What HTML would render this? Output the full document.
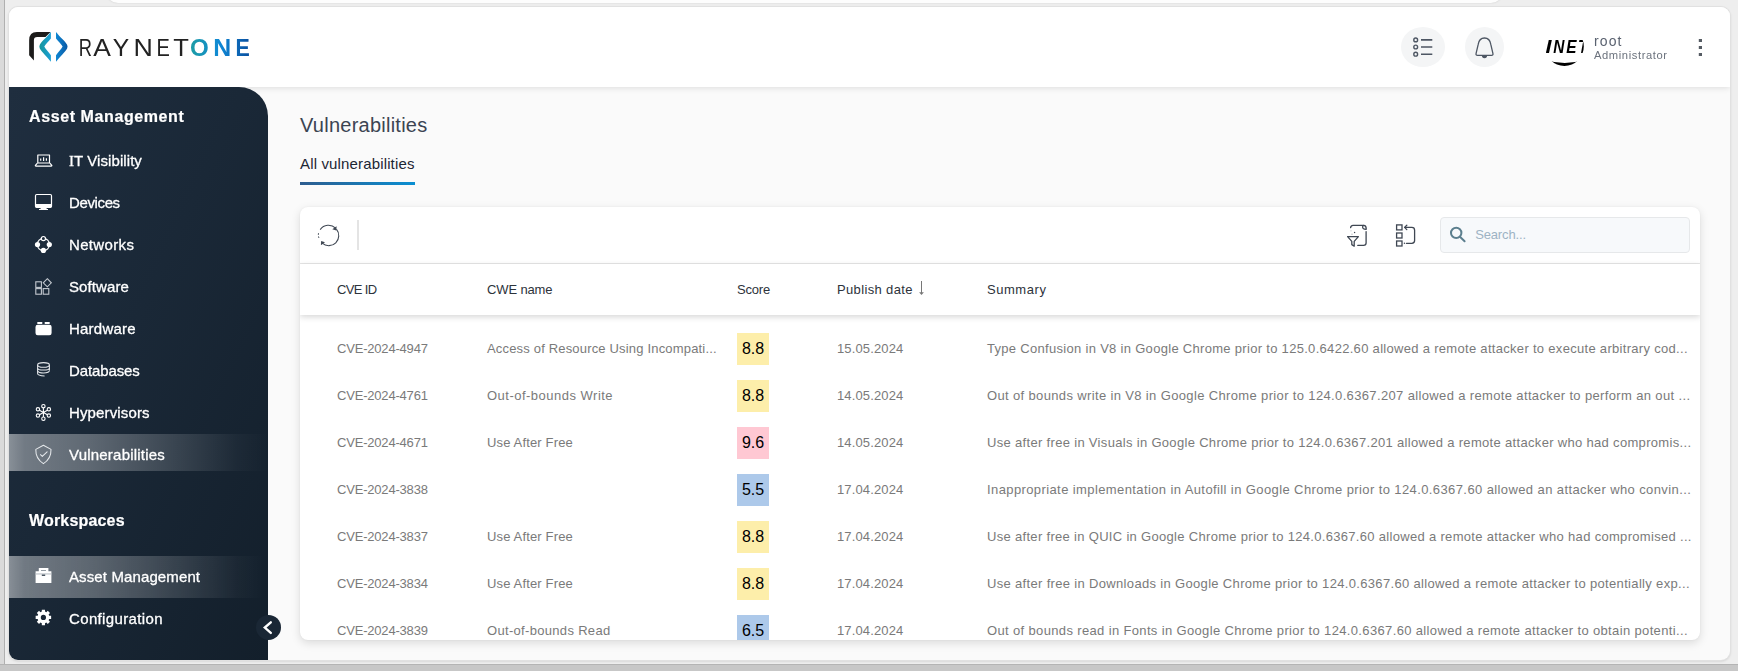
<!DOCTYPE html>
<html lang="en">
<head>
<meta charset="utf-8">
<title>RayNet One - Vulnerabilities</title>
<style>
*{box-sizing:border-box;margin:0;padding:0}
html,body{width:1738px;height:671px;overflow:hidden}
body{position:relative;background:#eeeeee;font-family:"Liberation Sans","DejaVu Sans",sans-serif;color:#333}
.abs{position:absolute}
.t{position:absolute;white-space:nowrap}
#lstrip{left:0;top:0;width:5px;height:671px;background:#dadada;border-right:1px solid #b0b0b0}
#toptab{left:106px;top:-10px;width:1397px;height:13px;background:#fdfdfd;border-radius:0 0 12px 12px;box-shadow:0 0 2px rgba(0,0,0,.12)}
#botband{left:0;top:664px;width:1738px;height:7px;background:#c7c7c7;border-top:1px solid #b4b4b4}
#app{left:9px;top:7px;width:1721px;height:653px;background:#fafafa;border-radius:9px;overflow:hidden;box-shadow:0 0 0 1px #e1e1e1,0 1px 3px rgba(0,0,0,.18)}
#hdr{will-change:transform;left:0;top:0;width:1721px;height:80px;background:#fff;box-shadow:0 1px 6px rgba(0,0,0,.12);z-index:3}
#side{will-change:transform;left:0;top:80px;width:259px;height:573px;background:linear-gradient(115deg,#1f2e3f 0%,#1a2837 45%,#131f2b 100%);border-radius:0 29px 0 0;z-index:4;color:#fff}
.sh{font-weight:bold;font-size:16px;line-height:20px;color:#fff;-webkit-text-stroke:.2px #fff}
.si{position:absolute;left:0;width:259px}
.sl{font-size:15px;line-height:20px;color:#fff;-webkit-text-stroke:.3px #fff}
.si svg{position:absolute;overflow:visible}
.sel{background:linear-gradient(90deg,rgba(255,255,255,.48) 0%,rgba(255,255,255,.38) 6%,rgba(255,255,255,.30) 31%,rgba(255,255,255,.16) 61%,rgba(255,255,255,.03) 88%,rgba(255,255,255,0) 100%)}
#title{font-size:20px;line-height:28px;color:#3b4452}
#tab{font-size:15px;line-height:20px;color:#1d2634}
#tabline{left:291px;top:175px;width:115px;height:3px;background:linear-gradient(90deg,#2d5c8e,#0a8fd2)}
#card{left:291px;top:200px;width:1400px;height:433px;background:#fff;border-radius:8px;box-shadow:0 3px 10px rgba(0,0,0,.13),0 0 2px rgba(0,0,0,.05);overflow:hidden}
#tb{left:0;top:0;width:1400px;height:57px;border-bottom:1px solid #e6e6e6}
#thead{left:0;top:57px;width:1400px;height:51px;background:#fff;box-shadow:0 2px 6px rgba(0,0,0,.16);z-index:2}
.th{font-size:13px;line-height:18px;color:#2d333b}
.row{position:absolute;left:0;width:1400px;height:47px}
.c{font-size:13px;line-height:18px;color:#7a7a7a}
.b{position:absolute;left:437px;top:8px;width:32px;height:32px;font-size:16px;line-height:32px;text-align:center;color:#000}
.y{background:#fdeeaa}.p{background:#ffc8d3}.bl{background:#adc9ea}
.rb{position:absolute;border-radius:50%;background:#f4f5f6}
#un{font-size:14px;line-height:16px;color:#5a6270}
#ur{font-size:11.2px;line-height:14px;color:#6b727d}
#search{left:1140px;top:10px;width:250px;height:36px;background:#f7f9fb;border:1px solid #e6e8ea;border-radius:4px}
#sph{font-size:13px;line-height:18px;color:#9db3c4}
</style>
</head>
<body>
<div id="lstrip" class="abs"></div>
<div id="toptab" class="abs"></div>
<div id="botband" class="abs"></div>
<div id="app" class="abs">
<div id="hdr" class="abs">
<svg class="abs" style="left:16px;top:21px;overflow:visible" width="230" height="38" viewBox="25 28 230 38">
<defs>
<linearGradient id="g1" x1="0" y1="0" x2="1" y2="0"><stop offset="0" stop-color="#17969a"/><stop offset="1" stop-color="#1a9fd6"/></linearGradient>
<linearGradient id="g2" x1="0" y1="0" x2="1" y2="0"><stop offset="0" stop-color="#0f88d4"/><stop offset="1" stop-color="#0a58a4"/></linearGradient>
<linearGradient id="g3" gradientUnits="userSpaceOnUse" x1="190" y1="0" x2="250" y2="0"><stop offset="0" stop-color="#1d9da4"/><stop offset=".5" stop-color="#0f88d6"/><stop offset="1" stop-color="#0a4f9f"/></linearGradient>
</defs>
<path d="M29.15 55.2 L29.15 40.3 Q29.15 32 36.9 32 L50.6 32 L45.5 37 L37.2 37 Q33.9 37 33.9 40.3 L33.9 60.6 Z" fill="#1c1b1a"/>
<path d="M50.9 32 C47 37 41.5 41.5 39.8 44.8 Q38.9 46.6 39.8 48.4 C41.5 51.7 47 56.5 50.9 61.8 L50.9 55.2 C48.5 52 45.5 49 44.3 46.6 C45.5 44.2 48.5 41.5 50.9 38.5 Z" fill="url(#g1)"/>
<path d="M56 32 C59.9 37 65.4 41.5 67.1 44.8 Q68 46.6 67.1 48.4 C65.4 51.7 59.9 56.5 56 61.8 L56 55.2 C58.4 52 61.4 49 62.6 46.6 C61.4 44.2 58.4 41.5 56 38.5 Z" fill="url(#g2)"/>
<text y="55.5" font-family="Liberation Sans, sans-serif" font-size="24.2" fill="#222"><tspan x="78.64" textLength="13.21" lengthAdjust="spacingAndGlyphs">R</tspan><tspan x="93.20" textLength="17.65" lengthAdjust="spacingAndGlyphs">A</tspan><tspan x="112.80" textLength="16.44" lengthAdjust="spacingAndGlyphs">Y</tspan><tspan x="133.49" textLength="19.33" lengthAdjust="spacingAndGlyphs">N</tspan><tspan x="156.57" textLength="13.34" lengthAdjust="spacingAndGlyphs">E</tspan><tspan x="173.30" textLength="15.66" lengthAdjust="spacingAndGlyphs">T</tspan></text>
<text y="55.5" font-family="Liberation Sans, sans-serif" font-size="23.6" font-weight="bold" fill="url(#g3)"><tspan x="190.10" textLength="18.76" lengthAdjust="spacingAndGlyphs">O</tspan><tspan x="213.35" textLength="17.95" lengthAdjust="spacingAndGlyphs">N</tspan><tspan x="235.59" textLength="14.28" lengthAdjust="spacingAndGlyphs">E</tspan></text>
</svg>
<div class="rb" style="left:1392px;top:20px;width:44px;height:40px"></div><svg class="abs" style="left:1399px;top:27px;overflow:visible" width="30" height="26" viewBox="1408 34 30 26"><g fill="none" stroke="#4d5663" stroke-width="1.4">
<circle cx="1415.7" cy="39.9" r="1.9"/><circle cx="1415.7" cy="47" r="1.9"/><circle cx="1415.7" cy="54.2" r="1.9"/>
<path d="M1421 39.9H1432.3M1421 47H1432.3M1421 54.2H1432.3" stroke-width="1.6"/></g></svg>
<div class="rb" style="left:1456px;top:20px;width:39px;height:40px"></div><svg class="abs" style="left:1463px;top:27px;overflow:visible" width="26" height="28" viewBox="1472 34 26 28"><g transform="translate(1484.5,47)">
<path d="M-6.9 8.4 Q-8.9 8.4 -8.4 6.4 L-6.3 -2.6 C-5.6 -7 -2.8 -9 0 -9 C2.8 -9 5.6 -7 6.3 -2.6 L8.4 6.4 Q8.9 8.4 6.9 8.4 Z" fill="none" stroke="#4d5663" stroke-width="1.3" stroke-linejoin="round"/>
<path d="M-2.6 8.6 A2.6 2.6 0 0 0 2.6 8.6 Z" fill="#4d5663"/></g></svg>
<svg class="abs" style="left:1536px;top:20px;overflow:visible" width="39" height="39" viewBox="1545 27 39 39"><defs><clipPath id="av"><circle cx="1564.4" cy="46.5" r="19.4"/></clipPath></defs>
<g clip-path="url(#av)"><rect x="1540" y="22" width="50" height="50" fill="#fff"/>
<text y="53.1" font-family="Liberation Sans, sans-serif" font-size="18.5" font-weight="bold" font-style="italic" fill="#000"><tspan x="1545.40" textLength="6.00" lengthAdjust="spacingAndGlyphs">I</tspan><tspan x="1553.20" textLength="11.17" lengthAdjust="spacingAndGlyphs">N</tspan><tspan x="1566.20" textLength="10.25" lengthAdjust="spacingAndGlyphs">E</tspan><tspan x="1577.83" textLength="11.02" lengthAdjust="spacingAndGlyphs">T</tspan></text>
<path d="M1540 70 L1540 58 Q1564.4 68 1590 58 L1590 70 Z" fill="#000"/></g></svg>
<span id="un" class="t " style="left:1585px;top:26px;letter-spacing:1.125px;">root</span><span id="ur" class="t " style="left:1585px;top:41.3px;letter-spacing:0.592px;">Administrator</span>
<svg class="abs" style="left:1689px;top:31px;overflow:visible" width="6" height="20" viewBox="1698 38 6 20"><path d="M1698.8 39h3.2v3h-3.2zM1698.8 46h3.2v3h-3.2zM1698.8 53h3.2v3h-3.2z" fill="#555b63"/></svg>
</div>
<div id="side" class="abs">
<span class="t sh" style="left:20px;top:19.5px;letter-spacing:0.599px;">Asset Management</span>
<svg class="abs" style="left:24px;top:63px;overflow:visible" width="22" height="20" viewBox="33 150 22 20"><g fill="none" stroke="#fff" stroke-width="1.2" stroke-linejoin="round">
<rect x="37.8" y="155" width="11.7" height="8"/><path d="M37.4 163.2 L35.4 165.4 Q35.2 166.2 36 166.2 L51.2 166.2 Q52 166.2 51.8 165.4 L49.9 163.2"/></g>
<path d="M40.1 158.6h1.2v2.2h-1.2zM43 157.3h1.2v3.6H43zM45.8 158.3h1.2v2.5h-1.2z" fill="#fff"/></svg><span class="t sl" style="left:60px;top:63.5px;letter-spacing:0.075px;"><span style="font-family:'Liberation Serif',serif">I</span>T Visibility</span>
<svg class="abs" style="left:24px;top:105px;overflow:visible" width="22" height="20" viewBox="33 192 22 20"><rect x="35.5" y="194.5" width="16" height="13" rx="1.2" fill="none" stroke="#fff" stroke-width="1.2"/>
<path d="M35.5 204h16v2.6q0 .9-.9.9h-14.2q-.9 0-.9-.9zM40.9 207.4h5.4l.5 1.5h-6.4zM39 208.9h9v1.1h-9z" fill="#fff"/></svg><span class="t sl" style="left:60px;top:105.5px;letter-spacing:-0.375px;">Devices</span>
<svg class="abs" style="left:24px;top:147px;overflow:visible" width="22" height="21" viewBox="33 234 22 21"><circle cx="43.4" cy="244.5" r="6.1" fill="none" stroke="#fff" stroke-width="1.2"/>
<circle cx="43.4" cy="238.6" r="2.1" fill="#1c2a3a" stroke="#fff" stroke-width="1.2"/>
<circle cx="37.5" cy="244.5" r="2.6" fill="#fff"/><circle cx="49.3" cy="244.5" r="2.6" fill="#fff"/><circle cx="43.4" cy="250.4" r="2.6" fill="#fff"/></svg><span class="t sl" style="left:60px;top:147.5px;letter-spacing:0.341px;">Networks</span>
<svg class="abs" style="left:24px;top:189px;overflow:visible" width="22" height="21" viewBox="33 276 22 21"><g fill="none" stroke="#c3c8cf" stroke-width="1.1">
<rect x="35.8" y="281.8" width="5.6" height="5.6"/><rect x="35.8" y="288.6" width="5.6" height="5.6"/><rect x="43.2" y="288.6" width="5.6" height="5.6"/>
<path d="M47.3 278.7 L51.3 282.8 L47.3 286.8 L43.3 282.8 Z"/></g></svg><span class="t sl" style="left:60px;top:189.5px;letter-spacing:0.101px;">Software</span>
<svg class="abs" style="left:24px;top:231px;overflow:visible" width="22" height="20" viewBox="33 318 22 20"><rect x="35.5" y="324.8" width="16.1" height="10.5" rx="2.2" fill="#fff"/>
<rect x="37.2" y="322" width="5.2" height="1.9" rx=".6" fill="#fff"/><rect x="44.6" y="322" width="5.2" height="1.9" rx=".6" fill="#fff"/></svg><span class="t sl" style="left:60px;top:231.5px;letter-spacing:0.225px;">Hardware</span>
<svg class="abs" style="left:24px;top:273px;overflow:visible" width="22" height="20" viewBox="33 360 22 20"><g fill="none" stroke="#e3e6ea" stroke-width="1.05">
<ellipse cx="43.5" cy="364.9" rx="5.9" ry="2.3"/>
<path d="M37.6 364.9 V373.6 C37.6 375.2 40.5 375.9 44.6 375.9"/>
<path d="M49.4 364.9 V370.6"/>
<path d="M37.6 367.9 C37.6 370.8 49.4 370.8 49.4 367.9"/>
<path d="M37.6 370.8 C37.6 373.7 49.4 373.7 49.4 370.6"/></g></svg><span class="t sl" style="left:60px;top:273.5px;letter-spacing:-0.114px;">Databases</span>
<svg class="abs" style="left:24px;top:315px;overflow:visible" width="22" height="22" viewBox="33 402 22 22"><g fill="none" stroke="#fff" stroke-width="1.1"><path d="M43.40 412.45 L43.40 407.85 M43.40 412.45 L47.38 410.15 M43.40 412.45 L47.38 414.75 M43.40 412.45 L43.40 417.05 M43.40 412.45 L39.42 414.75 M43.40 412.45 L39.42 410.15"/><circle cx="43.40" cy="406.15" r="1.7"/><circle cx="48.86" cy="409.30" r="1.7"/><circle cx="48.86" cy="415.60" r="1.7"/><circle cx="43.40" cy="418.75" r="1.7"/><circle cx="37.94" cy="415.60" r="1.7"/><circle cx="37.94" cy="409.30" r="1.7"/></g></svg><span class="t sl" style="left:60px;top:315.5px;letter-spacing:0.142px;">Hypervisors</span>
<div class="si sel" style="top:347px;height:37px"></div><svg class="abs" style="left:24px;top:356px;overflow:visible" width="22" height="23" viewBox="33 443 22 23"><g fill="none" stroke="#e6e9ec" stroke-width="1.05" stroke-linejoin="round" stroke-linecap="round">
<path d="M43.4 445.3 L51 449.4 C51.2 455.5 48.6 460.2 43.4 463.6 C38.2 460.2 35.6 455.5 35.8 449.4 Z"/>
<path d="M40.5 454.7 L42.3 456.4 L47.1 451.8"/></g></svg><span class="t sl" style="left:60px;top:357.5px;letter-spacing:0.212px;">Vulnerabilities</span>
<span class="t sh" style="left:20px;top:423.5px;letter-spacing:0.180px;">Workspaces</span>
<div class="si sel" style="top:469px;height:42px"></div><svg class="abs" style="left:24px;top:479px;overflow:visible" width="22" height="20" viewBox="33 566 22 20"><path d="M35.6 571.3h3.2v-3.3h9.6v3.3h3v11.7h-15.8z" fill="#fff"/>
<path d="M41 570.1h5v.9h-5z" fill="#8a929b"/><path d="M35.6 573.4h15.8v1.1h-15.8z" fill="#b9bec4"/><path d="M41.8 574.5h3.4v1.5h-3.4z" fill="#4b5663"/></svg><span class="t sl" style="left:60px;top:480px;letter-spacing:0.118px;">Asset Management</span>
<svg class="abs" style="left:24px;top:520px;overflow:visible" width="22" height="21" viewBox="33 607 22 21"><path d="M51.14 615.83 L51.14 618.97 L49.18 619.00 L48.62 620.36 L49.98 621.76 L47.76 623.98 L46.36 622.62 L45.00 623.18 L44.97 625.14 L41.83 625.14 L41.80 623.18 L40.44 622.62 L39.04 623.98 L36.82 621.76 L38.18 620.36 L37.62 619.00 L35.66 618.97 L35.66 615.83 L37.62 615.80 L38.18 614.44 L36.82 613.04 L39.04 610.82 L40.44 612.18 L41.80 611.62 L41.83 609.66 L44.97 609.66 L45.00 611.62 L46.36 612.18 L47.76 610.82 L49.98 613.04 L48.62 614.44 L49.18 615.80 Z M46.0 617.4 A2.6 2.6 0 1 0 40.8 617.4 A2.6 2.6 0 1 0 46.0 617.4 Z" fill="#fff" fill-rule="evenodd"/></svg><span class="t sl" style="left:60px;top:522px;letter-spacing:0.356px;">Configuration</span>
</div>
<svg class="abs" style="left:247px;top:608px;overflow:visible;z-index:6" width="25" height="25" viewBox="256 615 25 25"><circle cx="268.5" cy="627.4" r="12.5" fill="#1a2735"/>
<path d="M270.8 622.3 L264.8 627.6 L270.8 632.9" fill="none" stroke="#fff" stroke-width="2.4" stroke-linecap="round" stroke-linejoin="miter"/></svg>
<span id="title" class="t " style="left:291px;top:103.6px;letter-spacing:0.245px;">Vulnerabilities</span><span id="tab" class="t " style="left:291px;top:147px;letter-spacing:0.149px;">All vulnerabilities</span><div id="tabline" class="abs"></div>
<div id="card" class="abs">
<div id="tb" class="abs"><svg class="abs" style="left:16px;top:16px;overflow:visible" width="26" height="26" viewBox="316 223 26 26"><g fill="none" stroke="#3f4753" stroke-width="1.05">
<path d="M320.2 229.6 A10 10 0 0 1 335.6 228.2"/><path d="M336.4 229.2 A10 10 0 0 1 322.2 243.2"/>
<path d="M318.9 238 A10 10 0 0 1 318.5 233.2" stroke-dasharray="1.6 1.6" stroke-width="1"/></g>
<path d="M336.6 226.2 L336.3 230.4 L332.3 229.3 Z" fill="#3f4753"/><path d="M320.9 245.2 L321.1 241 L325 242.2 Z" fill="#3f4753"/></svg><div class="abs" style="left:57px;top:13px;width:2px;height:30px;background:#e4e4e4"></div><svg class="abs" style="left:1045px;top:16px;overflow:visible" width="24" height="26" viewBox="1345 223 24 26"><g fill="none" stroke="#3f4753" stroke-width="1.3" stroke-linecap="round" stroke-linejoin="round">
<path d="M1350.6 227.6 Q1351 225.4 1353 225.4 L1363.8 225.4"/>
<path d="M1363.8 225.4 Q1366.2 225.6 1366.2 228.4 L1366.2 229.3 Q1362.6 229.4 1362.6 227 Q1362.6 225.4 1363.8 225.4"/>
<path d="M1366.1 231.6 L1366.1 243 Q1366.1 245.4 1363.6 245.4 L1357.8 245.4"/>
<path d="M1347.6 236.6 L1358.4 236.6 L1354.2 241.4 L1354.2 246.2 L1351.8 244.6 L1351.8 241.4 Z"/></g>
<g fill="#3f4753"><circle cx="1354.6" cy="232.5" r=".7"/><circle cx="1351" cy="230.8" r=".6" opacity=".35"/><circle cx="1352" cy="234.2" r=".6" opacity=".45"/></g></svg><svg class="abs" style="left:1094px;top:16px;overflow:visible" width="24" height="26" viewBox="1394 223 24 26"><g fill="none" stroke="#3f4753" stroke-width="1.3">
<rect x="1396.6" y="224.9" width="5.4" height="5"/><rect x="1396.6" y="233" width="5.4" height="5"/><rect x="1396.6" y="241" width="5.4" height="5"/>
<path d="M1404.8 227.4 L1411.8 227.4 Q1414.6 227.4 1414.6 230.2 L1414.6 240.5 Q1414.6 243.3 1411.8 243.3 L1406.4 243.3" stroke-linecap="round"/>
<path d="M1406.8 225.2 L1404.6 227.4 L1406.8 229.6" stroke-linecap="round" stroke-linejoin="round"/></g>
<circle cx="1404.4" cy="243.3" r=".7" fill="#3f4753"/></svg><div id="search" class="abs"></div><svg class="abs" style="left:1148px;top:18px;overflow:visible" width="20" height="20" viewBox="1448 225 20 20"><g fill="none" stroke="#5c7f8e" stroke-width="2" stroke-linecap="round">
<circle cx="1456.2" cy="232.9" r="5.2"/><path d="M1460.2 237 L1464.6 241.2"/></g></svg><span id="sph" class="t " style="left:1175.2px;top:19px;letter-spacing:-0.153px;">Search...</span></div>
<div id="thead" class="abs"><span class="t th" style="left:37px;top:16.5px;letter-spacing:-0.628px;">CVE ID</span><span class="t th" style="left:187px;top:16.5px;letter-spacing:-0.137px;">CWE name</span><span class="t th" style="left:437px;top:16.5px;letter-spacing:-0.190px;">Score</span><span class="t th" style="left:537px;top:16.5px;letter-spacing:0.350px;">Publish date</span><span class="t th" style="left:687px;top:16.5px;letter-spacing:0.547px;">Summary</span><svg class="abs" style="left:618px;top:16px;overflow:visible" width="8" height="16" viewBox="918 280 8 16"><path d="M921.5 281 V293" stroke="#777" stroke-width="1" fill="none"/><path d="M919.1 292.2 h4.8 l-2.4 2.9 z" fill="#777"/></svg></div>
<div class="row" style="top:118px"><span class="t c" style="left:37px;top:14.5px;letter-spacing:-0.194px;">CVE-2024-4947</span><span class="t c" style="left:187px;top:14.5px;letter-spacing:0.176px;">Access of Resource Using Incompati...</span><span class="t c" style="left:537px;top:14.5px;letter-spacing:0.137px;">15.05.2024</span><span class="t c" style="left:687px;top:14.5px;letter-spacing:0.303px;">Type Confusion in V8 in Google Chrome prior to 125.0.6422.60 allowed a remote attacker to execute arbitrary cod...</span><span class="b y">8.8</span></div>
<div class="row" style="top:165px"><span class="t c" style="left:37px;top:14.5px;letter-spacing:-0.194px;">CVE-2024-4761</span><span class="t c" style="left:187px;top:14.5px;letter-spacing:0.488px;">Out-of-bounds Write</span><span class="t c" style="left:537px;top:14.5px;letter-spacing:0.137px;">14.05.2024</span><span class="t c" style="left:687px;top:14.5px;letter-spacing:0.357px;">Out of bounds write in V8 in Google Chrome prior to 124.0.6367.207 allowed a remote attacker to perform an out ...</span><span class="b y">8.8</span></div>
<div class="row" style="top:212px"><span class="t c" style="left:37px;top:14.5px;letter-spacing:-0.194px;">CVE-2024-4671</span><span class="t c" style="left:187px;top:14.5px;letter-spacing:0.152px;">Use After Free</span><span class="t c" style="left:537px;top:14.5px;letter-spacing:0.137px;">14.05.2024</span><span class="t c" style="left:687px;top:14.5px;letter-spacing:0.320px;">Use after free in Visuals in Google Chrome prior to 124.0.6367.201 allowed a remote attacker who had compromis...</span><span class="b p">9.6</span></div>
<div class="row" style="top:259px"><span class="t c" style="left:37px;top:14.5px;letter-spacing:-0.194px;">CVE-2024-3838</span><span class="t c" style="left:537px;top:14.5px;letter-spacing:0.137px;">17.04.2024</span><span class="t c" style="left:687px;top:14.5px;letter-spacing:0.396px;">Inappropriate implementation in Autofill in Google Chrome prior to 124.0.6367.60 allowed an attacker who convin...</span><span class="b bl">5.5</span></div>
<div class="row" style="top:306px"><span class="t c" style="left:37px;top:14.5px;letter-spacing:-0.194px;">CVE-2024-3837</span><span class="t c" style="left:187px;top:14.5px;letter-spacing:0.152px;">Use After Free</span><span class="t c" style="left:537px;top:14.5px;letter-spacing:0.137px;">17.04.2024</span><span class="t c" style="left:687px;top:14.5px;letter-spacing:0.312px;">Use after free in QUIC in Google Chrome prior to 124.0.6367.60 allowed a remote attacker who had compromised ...</span><span class="b y">8.8</span></div>
<div class="row" style="top:353px"><span class="t c" style="left:37px;top:14.5px;letter-spacing:-0.194px;">CVE-2024-3834</span><span class="t c" style="left:187px;top:14.5px;letter-spacing:0.152px;">Use After Free</span><span class="t c" style="left:537px;top:14.5px;letter-spacing:0.137px;">17.04.2024</span><span class="t c" style="left:687px;top:14.5px;letter-spacing:0.331px;">Use after free in Downloads in Google Chrome prior to 124.0.6367.60 allowed a remote attacker to potentially exp...</span><span class="b y">8.8</span></div>
<div class="row" style="top:400px"><span class="t c" style="left:37px;top:14.5px;letter-spacing:-0.194px;">CVE-2024-3839</span><span class="t c" style="left:187px;top:14.5px;letter-spacing:0.318px;">Out-of-bounds Read</span><span class="t c" style="left:537px;top:14.5px;letter-spacing:0.137px;">17.04.2024</span><span class="t c" style="left:687px;top:14.5px;letter-spacing:0.354px;">Out of bounds read in Fonts in Google Chrome prior to 124.0.6367.60 allowed a remote attacker to obtain potenti...</span><span class="b bl">6.5</span></div>
</div>
</div>
</body>
</html>
